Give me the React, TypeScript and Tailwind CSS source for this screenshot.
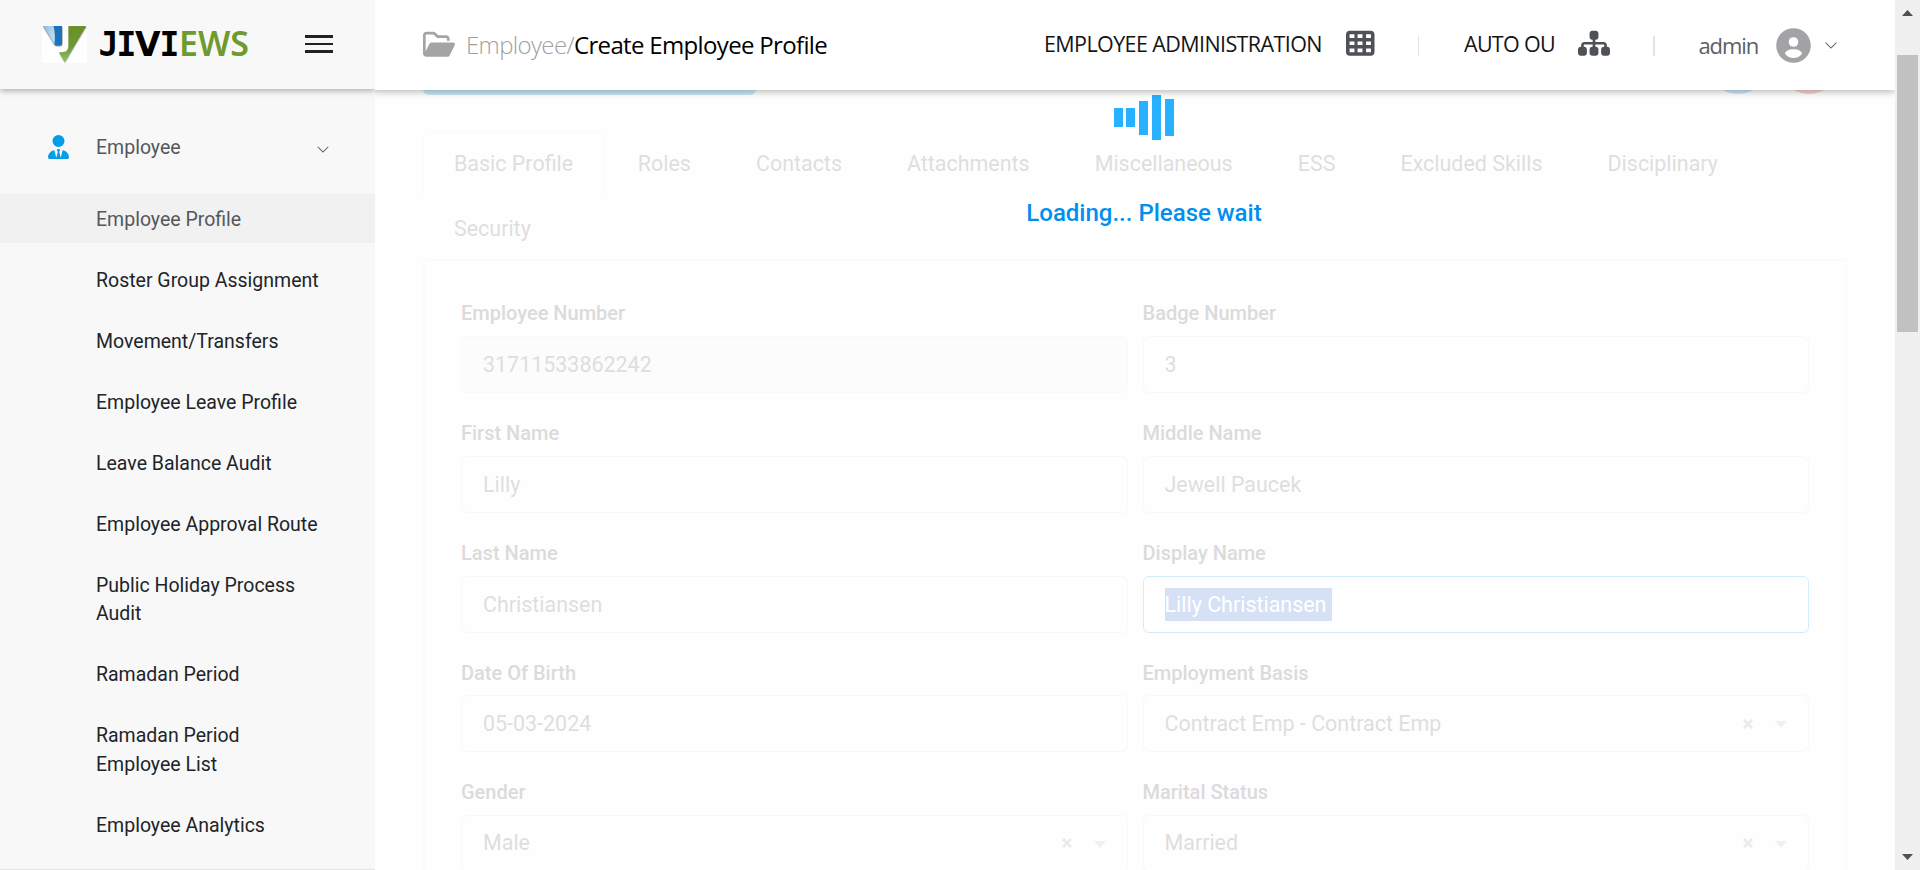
import React from "react";
import { FaSitemap, FaTableCells, FaUserTie } from "react-icons/fa6";

const menu = [
  "Employee Profile",
  "Roster Group Assignment",
  "Movement/Transfers",
  "Employee Leave Profile",
  "Leave Balance Audit",
  "Employee Approval Route",
  "Public Holiday Process Audit",
  "Ramadan Period",
  "Ramadan Period Employee List",
  "Employee Analytics",
];

const tabs = [
  "Basic Profile",
  "Roles",
  "Contacts",
  "Attachments",
  "Miscellaneous",
  "ESS",
  "Excluded Skills",
  "Disciplinary",
  "Security",
];

type FieldData = {
  label: string;
  value: string;
  kind?: "disabled" | "focused" | "select";
};

const fields: FieldData[] = [
  { label: "Employee Number", value: "31711533862242", kind: "disabled" },
  { label: "Badge Number", value: "3" },
  { label: "First Name", value: "Lilly" },
  { label: "Middle Name", value: "Jewell Paucek" },
  { label: "Last Name", value: "Christiansen" },
  { label: "Display Name", value: "Lilly Christiansen", kind: "focused" },
  { label: "Date Of Birth", value: "05-03-2024" },
  { label: "Employment Basis", value: "Contract Emp - Contract Emp", kind: "select" },
  { label: "Gender", value: "Male", kind: "select" },
  { label: "Marital Status", value: "Married", kind: "select" },
];

function Logo() {
  return (
    <svg width="214" height="58" viewBox="0 -8 214 58" className="-mt-2" aria-label="JIVIEWS">
      <defs>
        <linearGradient id="sky" x1="0" y1="0" x2="1" y2="0.4">
          <stop offset="0" stopColor="#8fb9d6" />
          <stop offset="1" stopColor="#c3dcec" />
        </linearGradient>
        <linearGradient id="leaf" x1="0" y1="0" x2="0" y2="1">
          <stop offset="0" stopColor="#66902a" />
          <stop offset="0.6" stopColor="#6f9a30" />
          <stop offset="1" stopColor="#93c765" />
        </linearGradient>
        <filter id="soft" x="-20%" y="-20%" width="140%" height="140%">
          <feDropShadow dx="0.4" dy="0.7" stdDeviation="0.7" floodColor="#333" floodOpacity="0.7" />
        </filter>
      </defs>
      <rect x="0" y="1" width="45" height="38" fill="#fefefe" />
      <g filter="url(#soft)">
        <path d="M1 2H20V19Q20 21.500 17.500 21.500H14.500Q13 21.500 12 20Z" fill="#1f73bd" />
        <path d="M1 2H11.500Q13.500 10 12.500 20.500Z" fill="url(#sky)" />
        <path d="M26.500 2H44L22.500 38L17 28.500Q19 28 21.500 28Q26.500 27.500 26.500 21Z" fill="url(#leaf)" />
      </g>
      <text y="32" fontSize="33" fontWeight="700" fill="#000" fontFamily="DejaVu Sans Mono, monospace">
        <tspan x="56.500">J</tspan>
        <tspan x="74.500">I</tspan>
        <tspan x="93" fontFamily="DejaVu Sans, sans-serif">V</tspan>
        <tspan x="117.500">I</tspan>
      </text>
      <text x="137" y="32" fontSize="33.500" fontWeight="650" fill="#6f9a2d" textLength="70" lengthAdjust="spacingAndGlyphs" fontFamily="Noto Sans, sans-serif">
        EWS
      </text>
    </svg>
  );
}

function Chevron({ className }: { className: string }) {
  return (
    <svg viewBox="0 0 14 8" fill="none" stroke="currentColor" strokeWidth="1.2" className={className}>
      <path d="M0.800 0.800L7 7L13.200 0.800" />
    </svg>
  );
}

function Sidebar() {
  return (
    <aside className="flex h-full w-[375px] shrink-0 flex-col border-b border-[#e6e6e6] bg-[#f8f8f8]">
      <div className="flex h-[89px] shrink-0 items-start justify-between pr-[42px] pl-[42px] pt-6 shadow-[0_2px_6px_rgba(0,0,0,0.3)]">
        <Logo />
        <div className="mt-[11px] flex w-7 flex-col gap-[5px]">
          <span className="h-[2.600px] bg-[#1f2227]" />
          <span className="h-[2.600px] bg-[#1f2227]" />
          <span className="h-[2.600px] bg-[#1f2227]" />
        </div>
      </div>
      <div className="mt-[33px] mb-[47px] flex h-[50px] shrink-0 items-center pr-[46px] pl-12 text-[#54585c]">
        <FaUserTie className="h-6 w-[21px] text-[#059ce8]" />
        <span className="ml-[27px] flex-1 pt-[2px] text-[19.500px] leading-[28.600px]">Employee</span>
        <Chevron className="mt-1 h-[7px] w-3" />
      </div>
      <nav className="-mt-[25px] flex flex-col gap-[12.200px] text-[19.500px] leading-[28.600px] text-[#212429]">
        {menu.map((item, i) => (
          <a
            key={item}
            className={
              i === 0
                ? "bg-[#f1f1f1] pt-[11.600px] pr-[50px] pb-[8.800px] pl-[96px] text-[#54585c]"
                : "pt-[11.600px] pr-[50px] pb-[8.600px] pl-[96px]"
            }
          >
            {item}
          </a>
        ))}
      </nav>
    </aside>
  );
}

function TopBar() {
  return (
    <header className="relative z-20 flex h-[90px] shrink-0 items-center bg-white pl-[48px] font-['Open_Sans',sans-serif] shadow-[0_2px_7px_rgba(0,0,0,0.28)]">
      <svg viewBox="0 0 576 512" fill="#a2a4a6" className="mb-px h-[28.500px] w-8">
        <path d="M572.6 270.3l-96 192C471.2 473.2 460.1 480 447.1 480H64c-35.350 0-64-28.660-64-64V96c0-35.340 28.650-64 64-64h117.500c16.970 0 33.250 6.742 45.260 18.750L275.900 96H416c35.350 0 64 28.660 64 64v32h-48V160c0-8.824-7.178-16-16-16H256L192.800 84.690C189.800 81.660 185.800 80 181.500 80H64C55.180 80 48 87.180 48 96v288l71.160-142.300C124.600 230.800 135.700 224 147.800 224h396.200C567.700 224 583.200 248.900 572.600 270.300z" />
      </svg>
      <div className="ml-[11px] w-[578px] text-[24px] whitespace-nowrap text-black">
        <span className="font-light tracking-[-0.650px] text-[#a0a0a0]">Employee/</span>
        <span className="tracking-[-0.660px]">Create Employee Profile</span>
      </div>
      <div className="flex flex-1 items-center text-[21.500px] whitespace-nowrap text-[#151515]">
        <span className="w-[302px] pb-px tracking-[-0.600px]">EMPLOYEE ADMINISTRATION</span>
        <FaTableCells className="mb-[3px] h-[28.500px] w-[28.500px] text-[#4e5256]" />
        <span className="mt-[2px] ml-[43px] h-5 w-[1.500px] bg-[#e4e4e4]" />
        <span className="ml-[45px] w-[114px] pb-px tracking-[-0.700px]">AUTO OU</span>
        <FaSitemap className="mb-[3px] h-[28.500px] w-8 text-[#4e5256]" />
        <span className="mt-[2px] ml-[43px] h-5 w-[1.500px] bg-[#e4e4e4]" />
        <span className="ml-[44px] w-[77px] pt-px text-[22px] tracking-[-1.100px] text-[#5c6064]">admin</span>
        <svg viewBox="0 0 35 35" className="size-[35px]">
          <circle cx="17.500" cy="17.500" r="17.300" fill="#a2a3a5" />
          <circle cx="17.500" cy="14" r="4.800" fill="#fff" />
          <path d="M8.800 25.500C10.500 19.800 24.500 19.800 26.200 25.500C22 31.500 13 31.500 8.800 25.500Z" fill="#fff" />
        </svg>
        <Chevron className="ml-[13px] h-[7px] w-[14px] text-[#62666a]" />
      </div>
    </header>
  );
}

function Field({ label, value, kind }: FieldData) {
  const box =
    kind === "disabled"
      ? "border-[#f9f9f9] bg-[#fcfcfc] pt-px text-[#dedede]"
      : kind === "focused"
        ? "border-[#d2eefe] bg-[#fefefe] text-white"
        : kind === "select"
          ? "border-[#f8f8f8] bg-[#fefefe] text-[#dedede]"
          : "border-[#f8f8f8] bg-[#fefefe] pt-[1.500px] text-[#dedede]";
  return (
    <div className="flex flex-col">
      <label className="h-[38px] pt-[0.250px] text-[20px] leading-[30px] font-medium text-[#dbdbdc]">{label}</label>
      <div className={`flex h-[57px] items-center rounded-md border pr-[21px] pl-[21px] text-[21.450px] ${box}`}>
        <span className={kind === "focused" ? "bg-[#d7e1f5] pr-[6px] leading-[33px]" : "flex-1"}>{value}</span>
        {kind === "select" && (
          <>
            <svg viewBox="0 0 10 10" stroke="#ebebeb" strokeWidth="2.600" className="mr-[22px] size-[10px]">
              <path d="M1 1L9 9M9 1L1 9" />
            </svg>
            <svg viewBox="0 0 12 7" fill="#f0f0f0" className="mt-0.5 h-[7px] w-3">
              <path d="M0 0H12L6 7Z" />
            </svg>
          </>
        )}
      </div>
    </div>
  );
}

function Loader() {
  return (
    <div className="absolute inset-x-0 top-[5px] flex flex-col items-center pl-[18px]">
      <div className="mr-px flex h-[45px] items-center gap-[3.750px]">
        <span className="h-[19px] w-[9px] bg-[#27b1ff]" />
        <span className="h-[19px] w-[9px] bg-[#27b1ff]" />
        <span className="h-[34px] w-[9px] bg-[#27b1ff]" />
        <span className="h-[45px] w-[9px] bg-[#27b1ff]" />
        <span className="h-[37px] w-[9px] bg-[#27b1ff]" />
      </div>
      <p className="mt-[57px] text-[24px] leading-[32px] font-medium text-[#008ff0]">Loading... Please wait</p>
    </div>
  );
}

function Content() {
  return (
    <div className="relative flex flex-1 flex-col overflow-hidden px-[48px]">
      <div className="flex h-[5px] shrink-0 justify-between overflow-hidden">
        <div className="-mt-[40px] h-[45px] w-[333px] rounded-md bg-[#c9e8f7]" />
        <div className="-mt-[56px] mr-[8px] flex gap-[11px]">
          <span className="size-[60px] rounded-full bg-[#c9e8f7]" />
          <span className="size-[60px] rounded-full bg-[#f6d3d3]" />
        </div>
      </div>
      <div className="mt-[36px] flex shrink-0 flex-wrap text-[21.450px] text-[#dedede]">
        {tabs.map((tab, i) => (
          <div
            key={tab}
            className={
              i === 0
                ? "mr-[3px] h-[64px] rounded-t-md border border-b-0 border-[#fafafa] px-[30px] pt-[17px] leading-[30px]"
                : i === 8
                  ? "mr-[4px] h-[64px] px-[31px] pt-[19px] leading-[30px]"
                  : "mr-[3.700px] h-[64px] px-[30.700px] pt-[18px] leading-[30px]"
            }
          >
            {tab}
          </div>
        ))}
      </div>
      <div className="grid shrink-0 grid-cols-2 gap-x-[15px] gap-y-[24.700px] border-2 border-[#fbfbfb] px-[36px] pt-[37.200px]">
        {fields.map((f) => (
          <Field key={f.label} {...f} />
        ))}
      </div>
      <Loader />
    </div>
  );
}

function ScrollBar() {
  return (
    <div className="flex h-full w-[25px] shrink-0 flex-col items-center bg-[#f0f0f0] py-[10px]">
      <svg viewBox="0 0 11 6" fill="#505050" className="h-[6px] w-[11px] shrink-0">
        <path d="M5.500 0L11 6H0Z" />
      </svg>
      <div className="mt-[39px] h-[277px] w-[21px] shrink-0 bg-[#c1c1c1]" />
      <span className="flex-1" />
      <svg viewBox="0 0 11 6" fill="#505050" className="h-[6px] w-[11px] shrink-0">
        <path d="M5.500 6L11 0H0Z" />
      </svg>
    </div>
  );
}

export default function App() {
  return (
    <div className="flex h-[870px] w-[1920px] overflow-hidden bg-[#fefefe] font-['Roboto',sans-serif]">
      <Sidebar />
      <main className="flex h-full min-w-0 flex-1 flex-col overflow-hidden">
        <TopBar />
        <Content />
      </main>
      <ScrollBar />
    </div>
  );
}
